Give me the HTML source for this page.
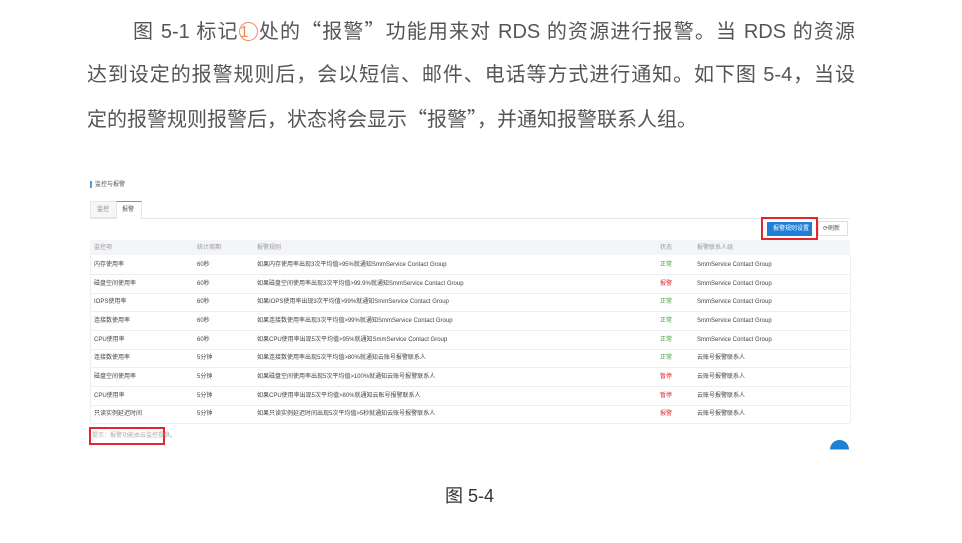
<!DOCTYPE html>
<html><head><meta charset="utf-8"><style>
body{margin:0;width:962px;height:543px;background:#fff;position:relative;overflow:hidden;font-family:"Liberation Sans","Noto Sans CJK SC",sans-serif}
.p{position:absolute;font-size:20px;color:#555;height:28px;line-height:28px;text-align:justify;text-align-last:justify;white-space:nowrap}
.q{font-family:"Noto Sans CJK SC",sans-serif}
.c1{display:inline-block;width:19px;height:19px;border:1px solid #f08a5d;border-radius:50%;color:#f08a5d;font-size:16px;line-height:19px;text-align:center;box-sizing:border-box;vertical-align:1px}
.s{position:absolute;font-size:6px;line-height:8px;color:#555;white-space:nowrap}
.row{position:absolute;left:90px;width:760px;height:18px;border-bottom:1px solid #eceef2}
.row span{position:absolute;top:5px;font-size:6px;line-height:8px;color:#444;white-space:nowrap}
</style></head><body>
<div class="p" style="left:133px;top:16px;width:722px">图 5-1 标记<span class="c1">1</span>处的<span class="q">“报警”</span>功能用来对 RDS 的资源进行报警。当 RDS 的资源</div>
<div class="p" style="left:87px;top:61px;width:768px">达到设定的报警规则后，会以短信、邮件、电话等方式进行通知。如下图 5-4，当设</div>
<div class="p" style="left:87px;top:104px;width:620px;text-align-last:left">定的报警规则报警后，状态将会显示<span class="q">“报警”</span>，并通知报警联系人组。</div>

<div style="position:absolute;left:90px;top:181px;width:2px;height:7px;background:#4a9fe0"></div>
<div class="s" style="left:95px;top:181px">监控与报警</div>
<div style="position:absolute;left:90px;top:218px;width:760px;height:1px;background:#e4e6ea"></div>
<div style="position:absolute;left:90px;top:201px;width:26px;height:17px;background:#f5f6f8;border:1px solid #e4e6ea;border-right:none;box-sizing:border-box"></div>
<div class="s" style="left:97px;top:206px;color:#888">监控</div>
<div style="position:absolute;left:116px;top:201px;width:26px;height:18px;background:#fff;border:1px solid #e4e6ea;border-top:1px solid #4a9fe0;border-bottom:none;box-sizing:border-box"></div>
<div class="s" style="left:122px;top:206px">报警</div>

<div style="position:absolute;left:761px;top:217px;width:57px;height:23px;border:2px solid #e3262d;box-sizing:border-box"></div>
<div style="position:absolute;left:767px;top:222px;width:45px;height:14px;background:#1e7fd6"></div>
<div class="s" style="left:773px;top:225px;color:#fff">报警规则设置</div>
<div style="position:absolute;left:818px;top:221px;width:30px;height:15px;border:1px solid #dcdfe4;box-sizing:border-box;background:#fff"></div>
<div class="s" style="left:823px;top:225px">⟳刷新</div>

<div style="position:absolute;left:90px;top:240px;width:760px;height:15px;background:#f4f5f9"></div>
<div class="row" style="top:240px;height:15px;border:none"><span style="left:4px;top:4px;color:#999">监控项</span><span style="left:107px;top:4px;color:#999">统计周期</span><span style="left:167px;top:4px;color:#999">报警规则</span><span style="left:570px;top:4px;color:#999">状态</span><span style="left:607px;top:4px;color:#999">报警联系人组</span></div>
<div style="position:absolute;left:90px;top:255px;width:759px;height:168px;border-left:1px solid #eceef2;border-right:1px solid #eceef2"></div>

<div class="row" style="top:256px"><span style="left:4px">内存使用率</span><span style="left:107px">60秒</span><span style="left:167px">如果内存使用率出现3次平均值&gt;95%就通知SmmService Contact Group</span><span style="left:570px;color:#3aa33a">正常</span><span style="left:607px">SmmService Contact Group</span></div>
<div class="row" style="top:275px"><span style="left:4px">磁盘空间使用率</span><span style="left:107px">60秒</span><span style="left:167px">如果磁盘空间使用率出现3次平均值&gt;99.9%就通知SmmService Contact Group</span><span style="left:570px;color:#e3262d">报警</span><span style="left:607px">SmmService Contact Group</span></div>
<div class="row" style="top:293px"><span style="left:4px">IOPS使用率</span><span style="left:107px">60秒</span><span style="left:167px">如果IOPS使用率出现3次平均值&gt;99%就通知SmmService Contact Group</span><span style="left:570px;color:#3aa33a">正常</span><span style="left:607px">SmmService Contact Group</span></div>
<div class="row" style="top:312px"><span style="left:4px">连接数使用率</span><span style="left:107px">60秒</span><span style="left:167px">如果连接数使用率出现3次平均值&gt;99%就通知SmmService Contact Group</span><span style="left:570px;color:#3aa33a">正常</span><span style="left:607px">SmmService Contact Group</span></div>
<div class="row" style="top:331px"><span style="left:4px">CPU使用率</span><span style="left:107px">60秒</span><span style="left:167px">如果CPU使用率出现5次平均值&gt;95%就通知SmmService Contact Group</span><span style="left:570px;color:#3aa33a">正常</span><span style="left:607px">SmmService Contact Group</span></div>
<div class="row" style="top:349px"><span style="left:4px">连接数使用率</span><span style="left:107px">5分钟</span><span style="left:167px">如果连接数使用率出现5次平均值&gt;80%就通知云账号报警联系人</span><span style="left:570px;color:#3aa33a">正常</span><span style="left:607px">云账号报警联系人</span></div>
<div class="row" style="top:368px"><span style="left:4px">磁盘空间使用率</span><span style="left:107px">5分钟</span><span style="left:167px">如果磁盘空间使用率出现5次平均值&gt;100%就通知云账号报警联系人</span><span style="left:570px;color:#e3262d">暂停</span><span style="left:607px">云账号报警联系人</span></div>
<div class="row" style="top:387px"><span style="left:4px">CPU使用率</span><span style="left:107px">5分钟</span><span style="left:167px">如果CPU使用率出现5次平均值&gt;80%就通知云账号报警联系人</span><span style="left:570px;color:#e3262d">暂停</span><span style="left:607px">云账号报警联系人</span></div>
<div class="row" style="top:405px"><span style="left:4px">只读实例延迟时间</span><span style="left:107px">5分钟</span><span style="left:167px">如果只读实例延迟时间出现5次平均值&gt;5秒就通知云账号报警联系人</span><span style="left:570px;color:#e3262d">报警</span><span style="left:607px">云账号报警联系人</span></div>

<div style="position:absolute;left:89px;top:427px;width:76px;height:18px;border:2px solid #e3262d;box-sizing:border-box"></div>
<div class="s" style="left:92px;top:432px;color:#aaa">提示：报警功能由云监控提供。</div>

<div style="position:absolute;left:830px;top:440px;width:19px;height:19px;border-radius:50%;background:#1e7fd6;clip-path:inset(0 0 50% 0)"></div>

<div style="position:absolute;left:445px;top:484px;font-size:18px;color:#333;line-height:24px">图 5-4</div>
</body></html>
